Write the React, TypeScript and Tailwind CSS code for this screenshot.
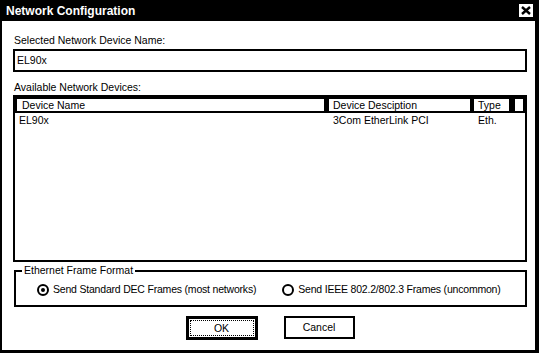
import React from 'react';

const font = "font-['Liberation_Sans',Arial,sans-serif]";

const Radio: React.FC<{ checked?: boolean; label: string }> = ({ checked, label }) => (
  <div className="flex items-center gap-[4px] whitespace-nowrap">
    <span className="w-[12px] h-[12px] rounded-full border-2 border-black bg-white flex items-center justify-center">
      {checked && <span className="w-[4px] h-[4px] rounded-full bg-black" />}
    </span>
    <span className="text-[10.5px] leading-[13px] tracking-[-0.2px]">{label}</span>
  </div>
);

const App: React.FC = () => {
  const devices = [{ name: 'EL90x', desc: '3Com EtherLink PCI', type: 'Eth.' }];

  return (
    <div className={`w-[539px] h-[353px] flex flex-col bg-white text-black ${font}`}>
      {/* Title bar */}
      <div className="h-[21px] bg-black flex items-center justify-between pl-[6px] pr-[6px] shrink-0">
        <span className="text-white font-bold text-[12px] leading-[14px]">Network Configuration</span>
        <span className="w-[14px] h-[13px] bg-white flex items-center justify-center">
          <svg width="10" height="9" viewBox="0 0 10 9">
            <path d="M1 1 L9 8 M9 1 L1 8" stroke="black" strokeWidth="2.4" />
          </svg>
        </span>
      </div>

      {/* Body */}
      <div className="flex-1 flex flex-col border-l-[2px] border-r-[4px] border-b-[3px] border-black pl-[11px] pr-[8px] pt-[13px] text-[10.5px]">
        <div className="leading-[13px] pl-[1px]">Selected Network Device Name:</div>
        <div className="mt-[2px] h-[23px] border-2 border-black flex items-center pl-[2px] leading-[13px]">
          EL90x
        </div>

        <div className="mt-[9px] leading-[13px] pl-[1px]">Available Network Devices:</div>
        <div className="mt-[1px] h-[167px] border-2 border-black flex flex-col">
          <div className="bg-black flex pl-[2px] pt-[2px] pb-[2px] leading-[12px]">
            <div className="w-[307px] h-[12px] bg-white pl-[5px]">Device Name</div>
            <div className="ml-[5px] w-[141px] h-[12px] bg-white pl-[4px]">Device Desciption</div>
            <div className="ml-[4px] w-[35px] h-[12px] bg-white pl-[4px]">Type</div>
            <div className="ml-[6px] w-[8px] h-[12px] bg-white" />
          </div>
          {devices.map((d) => (
            <div key={d.name} className="flex pl-[2px] leading-[13px] pt-[1px]">
              <div className="w-[312px] pl-[2px]">{d.name}</div>
              <div className="w-[145px] pl-[4px]">{d.desc}</div>
              <div className="w-[41px] pl-[4px]">{d.type}</div>
            </div>
          ))}
        </div>

        {/* Group box */}
        <div className="relative mt-[8px] ml-[1px] h-[37px] border-2 border-black flex items-center pl-[21px]">
          <span className="absolute left-[6px] -top-[8px] bg-white px-[2px] leading-[13px]">
            Ethernet Frame Format
          </span>
          <div className="flex items-center gap-[26px] pt-[2px]">
            <Radio checked label="Send Standard DEC Frames (most networks)" />
            <Radio label="Send IEEE 802.2/802.3 Frames (uncommon)" />
          </div>
        </div>

        {/* Buttons */}
        <div className="mt-[9px] flex justify-center gap-[26px]">
          <button className="w-[72px] h-[24px] border-[3px] border-black bg-white p-[1px]">
            <span className="w-full h-full border border-dotted border-black flex items-center justify-center leading-[13px]">
              OK
            </span>
          </button>
          <button className="w-[71px] h-[23px] border-2 border-black bg-white flex items-center justify-center leading-[13px]">
            Cancel
          </button>
        </div>
      </div>
    </div>
  );
};

export default App;
